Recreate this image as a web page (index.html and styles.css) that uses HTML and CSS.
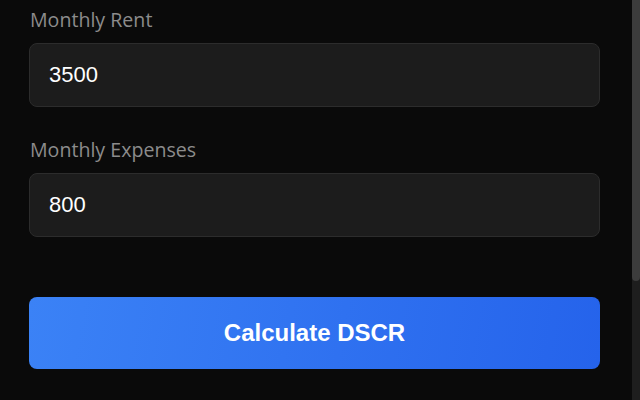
FILE: index.html
```html
<!DOCTYPE html>
<html lang="en">
<head>
<meta charset="utf-8">
<title>DSCR Calculator</title>
<link rel="stylesheet" href="styles.css">
</head>
<body>
<main class="form">
  <div class="field">
    <label class="label" for="rent">Monthly Rent</label>
    <input class="input" id="rent" type="text" value="3500">
  </div>
  <div class="field">
    <label class="label" for="exp">Monthly Expenses</label>
    <input class="input" id="exp" type="text" value="800">
  </div>
  <button class="btn" type="button">Calculate DSCR</button>
</main>
<div class="scrollbar" aria-hidden="true"><div class="thumb"></div></div>
</body>
</html>
```
FILE: styles.css
```css
html { background: #0a0a0a; }
body {
  margin: 0;
  background: #0a0a0a;
  font-family: "Liberation Sans", Arial, sans-serif;
}
.form {
  padding: 5px 40px 0 29px;
  display: flex;
  flex-direction: column;
}
.field { display: flex; flex-direction: column; margin-bottom: 28px; }
.label {
  font-family: "Open Sans", "Noto Sans", sans-serif;
  font-size: 19.6px;
  line-height: 30px;
  color: #8c8c8c;
  margin-bottom: 8px;
  padding-left: 1px;
}
.input {
  box-sizing: border-box;
  height: 64px;
  width: 100%;
  background: #1c1c1c;
  border: 1px solid #2c2c2c;
  border-radius: 8px;
  padding: 0 19px;
  color: #ffffff;
  font-family: "Liberation Sans", Arial, sans-serif;
  font-size: 22px;
  outline: none;
}
.btn {
  margin-top: 32px;
  height: 72px;
  width: 100%;
  border: none;
  border-radius: 8px;
  background: linear-gradient(100deg, #3b82f6 0%, #2563eb 100%);
  color: #ffffff;
  font-family: "Liberation Sans", Arial, sans-serif;
  font-weight: 700;
  font-size: 24px;
  cursor: pointer;
}
.scrollbar {
  position: fixed;
  top: 0;
  right: 0;
  width: 8px;
  height: 100%;
  background: #1e1e1e;
}
.thumb {
  height: 281px;
  background: #3c3c3c;
  border-radius: 0 0 4px 4px;
}
```
